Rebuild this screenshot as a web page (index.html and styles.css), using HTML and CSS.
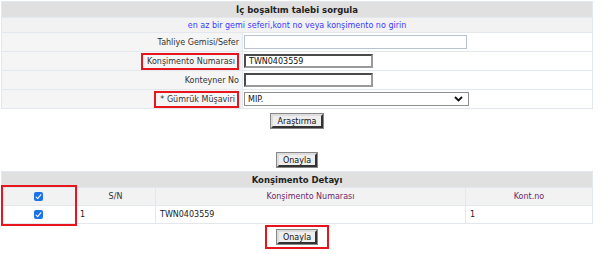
FILE: index.html
```html
<!DOCTYPE html>
<html lang="tr">
<head>
    <meta charset="UTF-8">
    <title>İç boşaltım talebi sorgula</title>
    <link rel="stylesheet" href="styles.css">
</head>
<body>
    <div class="page">
        <table class="query">
            <tr><th colspan="2" class="title">İç boşaltım talebi sorgula</th></tr>
            <tr><td colspan="2" class="hint">en az bir gemi seferi,kont no veya konşimento no girin</td></tr>
            <tr>
                <td class="label">Tahliye Gemisi/Sefer</td>
                <td class="field"><input type="text" class="input wide"></td>
            </tr>
            <tr>
                <td class="label"><span class="mark">Konşimento Numarası</span></td>
                <td class="field"><input type="text" class="input short dark" value="TWN0403559"></td>
            </tr>
            <tr>
                <td class="label">Konteyner No</td>
                <td class="field"><input type="text" class="input short dark"></td>
            </tr>
            <tr>
                <td class="label"><span class="mark">* Gümrük Müşaviri</span></td>
                <td class="field">
                    <div class="select">
                        <span>MIP.</span>
                        <svg width="9" height="6" viewBox="0 0 9 6"><path d="M1 1 L4.5 4.5 L8 1" fill="none" stroke="#111" stroke-width="1.8"/></svg>
                    </div>
                </td>
            </tr>
        </table>

        <div class="actions"><button class="btn">Araştırma</button></div>
        <div class="actions second"><button class="btn">Onayla</button></div>

        <div class="detail-wrap">
            <table class="detail">
                <tr><th colspan="4" class="title">Konşimento Detayı</th></tr>
                <tr class="head">
                    <td class="c-check"><span class="check"></span></td>
                    <td class="c-sn">S/N</td>
                    <td class="c-no link">Konşimento Numarası</td>
                    <td class="c-kont link">Kont.no</td>
                </tr>
                <tr class="row">
                    <td class="c-check"><span class="check"></span></td>
                    <td class="left">1</td>
                    <td class="left">TWN0403559</td>
                    <td class="left">1</td>
                </tr>
            </table>
            <div class="check-mark"></div>
        </div>

        <div class="actions last"><span class="mark btn-mark"><button class="btn">Onayla</button></span></div>
    </div>
</body>
</html>
```

FILE: styles.css
```css
body {
    margin: 0;
    background: #fff;
    font-family: "DejaVu Sans", Verdana, sans-serif;
    font-size: 8px;
    color: #333;
}

.page {
    width: 592px;
    padding: 1px 0 0 1px;
}

table {
    width: 592px;
    border-collapse: collapse;
}

td, th {
    padding: 0;
    border: 1px solid #e3e8ef;
}

.title {
    height: 15px;
    background: #e0e0e0;
    color: #222;
    font-weight: bold;
    font-size: 8.5px;
    text-align: center;
}

.hint {
    height: 14px;
    background: #f2f2f2;
    color: #3a3aff;
    text-align: center;
}

.label {
    width: 237px;
    height: 18px;
    padding-right: 3px;
    background: #f5f5f5;
    text-align: right;
}

.field {
    padding-left: 1px;
    background: #fff;
}

.mark {
    display: inline-block;
    padding: 2px 2px 2px 4px;
    border: 2px solid #e8141e;
}

.input {
    display: block;
    box-sizing: border-box;
    height: 14px;
    padding: 0 3px;
    margin: 0;
    font: inherit;
    color: #111;
    background: #fff;
    border: 1px solid #b9c4d2;
}

.wide {
    width: 223px;
}

.short {
    width: 129px;
}

.dark {
    border: 2px solid #4a4a4a;
    border-right-color: #9a9a9a;
    border-bottom-color: #9a9a9a;
}

.select {
    box-sizing: border-box;
    width: 225px;
    height: 14px;
    padding: 0 5px 0 3px;
    border: 1px solid #8f8f8f;
    display: flex;
    align-items: center;
    justify-content: space-between;
    color: #111;
}

.actions {
    display: flex;
    justify-content: center;
    padding-top: 5px;
}

.second {
    padding-top: 25px;
}

.btn {
    box-sizing: border-box;
    height: 14px;
    padding: 0 4px;
    font: inherit;
    color: #111;
    background: #eee;
    border: 2px solid;
    border-color: #ddd #333 #333 #ddd;
    outline: 1px solid #888;
}

.detail-wrap {
    position: relative;
    margin-top: 4px;
}

.detail .head td {
    height: 17px;
    background: #f2f2f2;
    text-align: center;
}

.detail .row td {
    height: 17px;
    background: #fff;
}

.c-check {
    width: 73px;
    text-align: center;
}

.c-sn {
    width: 79px;
}

.c-no {
    width: 309px;
}

.left {
    padding-left: 4px;
    text-align: left;
    color: #222;
}

.detail .row .c-check {
    padding-left: 0;
}

.link {
    color: #6a2a6a;
}

.check {
    display: inline-block;
    width: 9px;
    height: 9px;
    border-radius: 2px;
    background: #1a73e8;
    vertical-align: middle;
    position: relative;
}

.check::after {
    content: "";
    position: absolute;
    left: 3px;
    top: 1px;
    width: 2px;
    height: 5px;
    border: solid #fff;
    border-width: 0 1.5px 1.5px 0;
    transform: rotate(40deg);
}

.check-mark {
    position: absolute;
    left: 0;
    top: 14px;
    width: 72px;
    height: 37px;
    border: 2px solid #e8141e;
}

.last {
    padding-top: 1px;
}

.btn-mark {
    padding: 3px 10px;
}
```
